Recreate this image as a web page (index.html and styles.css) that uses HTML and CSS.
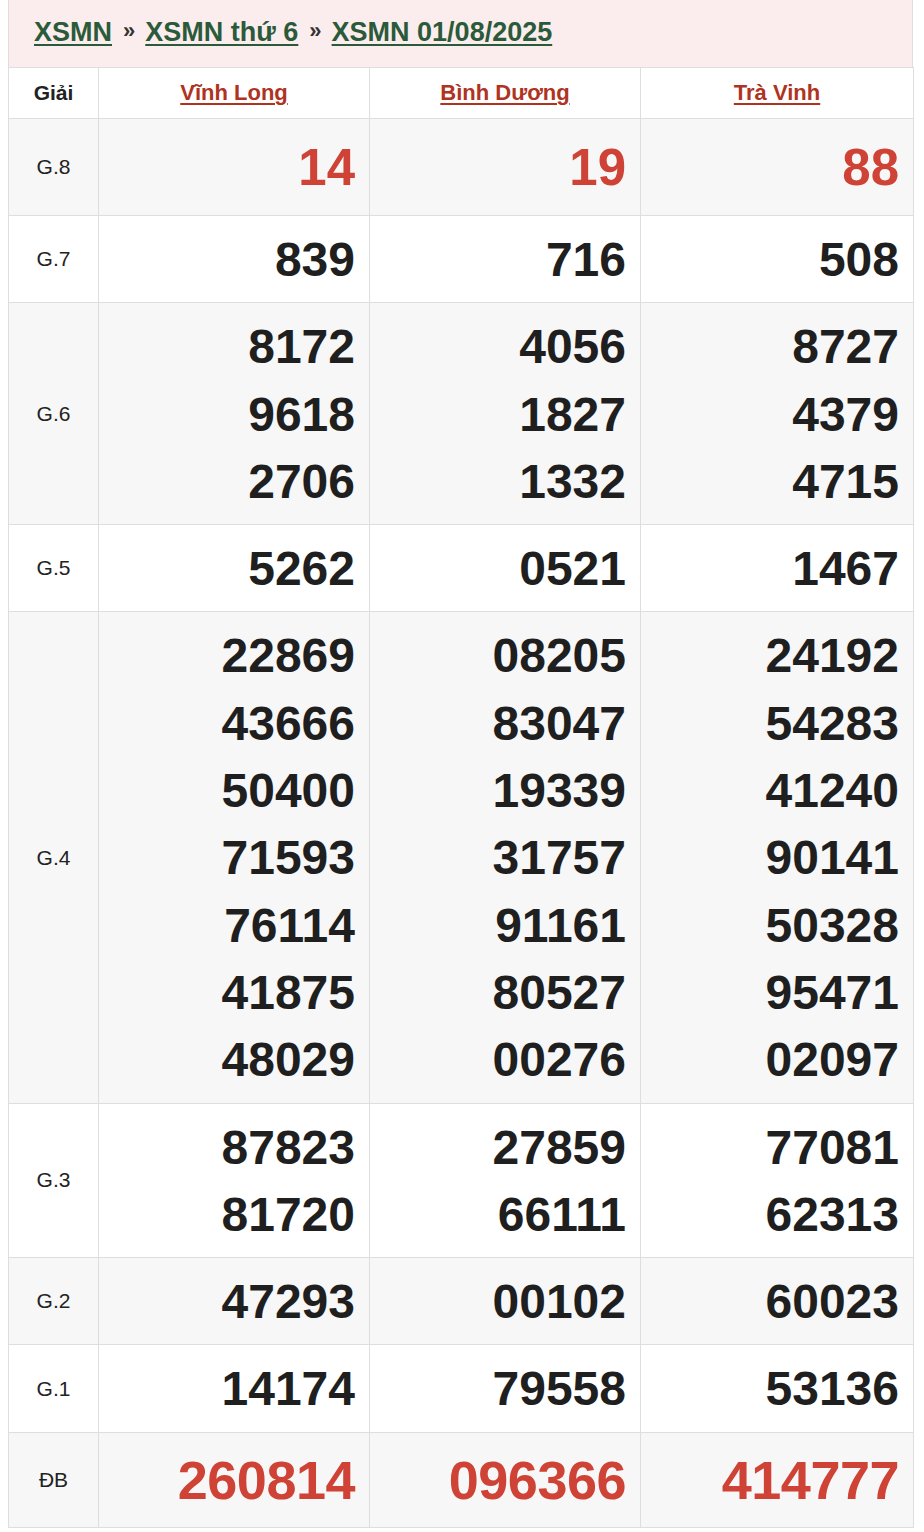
FILE: index.html
```html
<!DOCTYPE html>
<html lang="vi">
<head>
<meta charset="utf-8">
<title>XSMN 01/08/2025</title>
<link rel="stylesheet" href="styles.css">
</head>
<body>
<div class="wrap">
  <div class="crumbs">
    <a href="#">XSMN</a><span class="sep">»</span><a href="#">XSMN thứ 6</a><span class="sep">»</span><a href="#">XSMN 01/08/2025</a>
  </div>
  <table class="kq">
    <colgroup><col class="c-label"><col class="c-st"><col class="c-st"><col class="c-st3"></colgroup>
    <thead>
      <tr><th class="lbl-h">Giải</th><th><a href="#">Vĩnh Long</a></th><th><a href="#">Bình Dương</a></th><th><a href="#">Trà Vinh</a></th></tr>
    </thead>
    <tbody>
      <tr class="g8 alt"><td class="lbl">G.8</td><td class="num red">14</td><td class="num red">19</td><td class="num red">88</td></tr>
      <tr><td class="lbl">G.7</td><td class="num">839</td><td class="num">716</td><td class="num">508</td></tr>
      <tr class="alt"><td class="lbl">G.6</td>
        <td class="num"><div>8172</div><div>9618</div><div>2706</div></td>
        <td class="num"><div>4056</div><div>1827</div><div>1332</div></td>
        <td class="num"><div>8727</div><div>4379</div><div>4715</div></td></tr>
      <tr><td class="lbl">G.5</td><td class="num">5262</td><td class="num">0521</td><td class="num">1467</td></tr>
      <tr class="alt"><td class="lbl">G.4</td>
        <td class="num"><div>22869</div><div>43666</div><div>50400</div><div>71593</div><div>76114</div><div>41875</div><div>48029</div></td>
        <td class="num"><div>08205</div><div>83047</div><div>19339</div><div>31757</div><div>91161</div><div>80527</div><div>00276</div></td>
        <td class="num"><div>24192</div><div>54283</div><div>41240</div><div>90141</div><div>50328</div><div>95471</div><div>02097</div></td></tr>
      <tr><td class="lbl">G.3</td>
        <td class="num"><div>87823</div><div>81720</div></td>
        <td class="num"><div>27859</div><div>66111</div></td>
        <td class="num"><div>77081</div><div>62313</div></td></tr>
      <tr class="alt"><td class="lbl">G.2</td><td class="num">47293</td><td class="num">00102</td><td class="num">60023</td></tr>
      <tr><td class="lbl">G.1</td><td class="num">14174</td><td class="num">79558</td><td class="num">53136</td></tr>
      <tr class="db alt"><td class="lbl">ĐB</td><td class="num red">260814</td><td class="num red">096366</td><td class="num red">414777</td></tr>
    </tbody>
  </table>
</div>
</body>
</html>
```

FILE: styles.css
```css
html, body {
  margin: 0;
  padding: 0;
  background: #fff;
  font-family: "Liberation Sans", Arial, sans-serif;
  color: #222;
}
.wrap {
  width: 905px;
  margin-left: 8px;
}
.crumbs {
  background: #fbeded;
  height: 67px;
  box-sizing: border-box;
  border-left: 1px solid #e2dcdc;
  border-right: 1px solid #e2dcdc;
  padding: 12px 0 0 25px;
  font-size: 27px;
  font-weight: bold;
  line-height: 40px;
}
.crumbs a {
  color: #2b5a3a;
  text-decoration: underline;
  text-decoration-thickness: 2px;
  text-underline-offset: 3px;
}
.crumbs .sep {
  color: #333;
  font-size: 22px;
  margin: 0 10px 0 11px;
  position: relative;
  top: -3px;
}
.kq {
  width: 905px;
  border-collapse: collapse;
  table-layout: fixed;
}
.c-label { width: 90px; }
.c-st { width: 271px; }
.c-st3 { width: 273px; }
.kq th, .kq td {
  border: 1px solid #dedede;
}
.kq th {
  height: 50px;
  padding: 0;
  font-size: 22px;
  font-weight: bold;
  text-align: center;
  vertical-align: middle;
  background: #fff;
}
.kq th a {
  color: #b0331f;
  text-decoration: underline;
  text-decoration-thickness: 2px;
  text-underline-offset: 3px;
}
.kq th.lbl-h { color: #222; font-size: 21px; }
.kq tr.alt td { background: #f7f7f7; }
.kq td.lbl {
  text-align: center;
  vertical-align: middle;
  font-size: 21px;
  color: #222;
  padding: 0;
}
.kq td.num {
  text-align: right;
  vertical-align: middle;
  padding: 10px 14px 9px 0;
  font-size: 48px;
  font-weight: bold;
  line-height: 67.3px;
  color: #1f1f1f;
}
.kq td.num.red { color: #cf4336; }
.kq tr.g8 td.num { font-size: 51px; line-height: 67px; padding: 15px 14px 14px 0; }
.kq tr.db td.num { font-size: 54px; line-height: 67px; padding: 14px 14px 13px 0; letter-spacing: -0.5px; }
```
